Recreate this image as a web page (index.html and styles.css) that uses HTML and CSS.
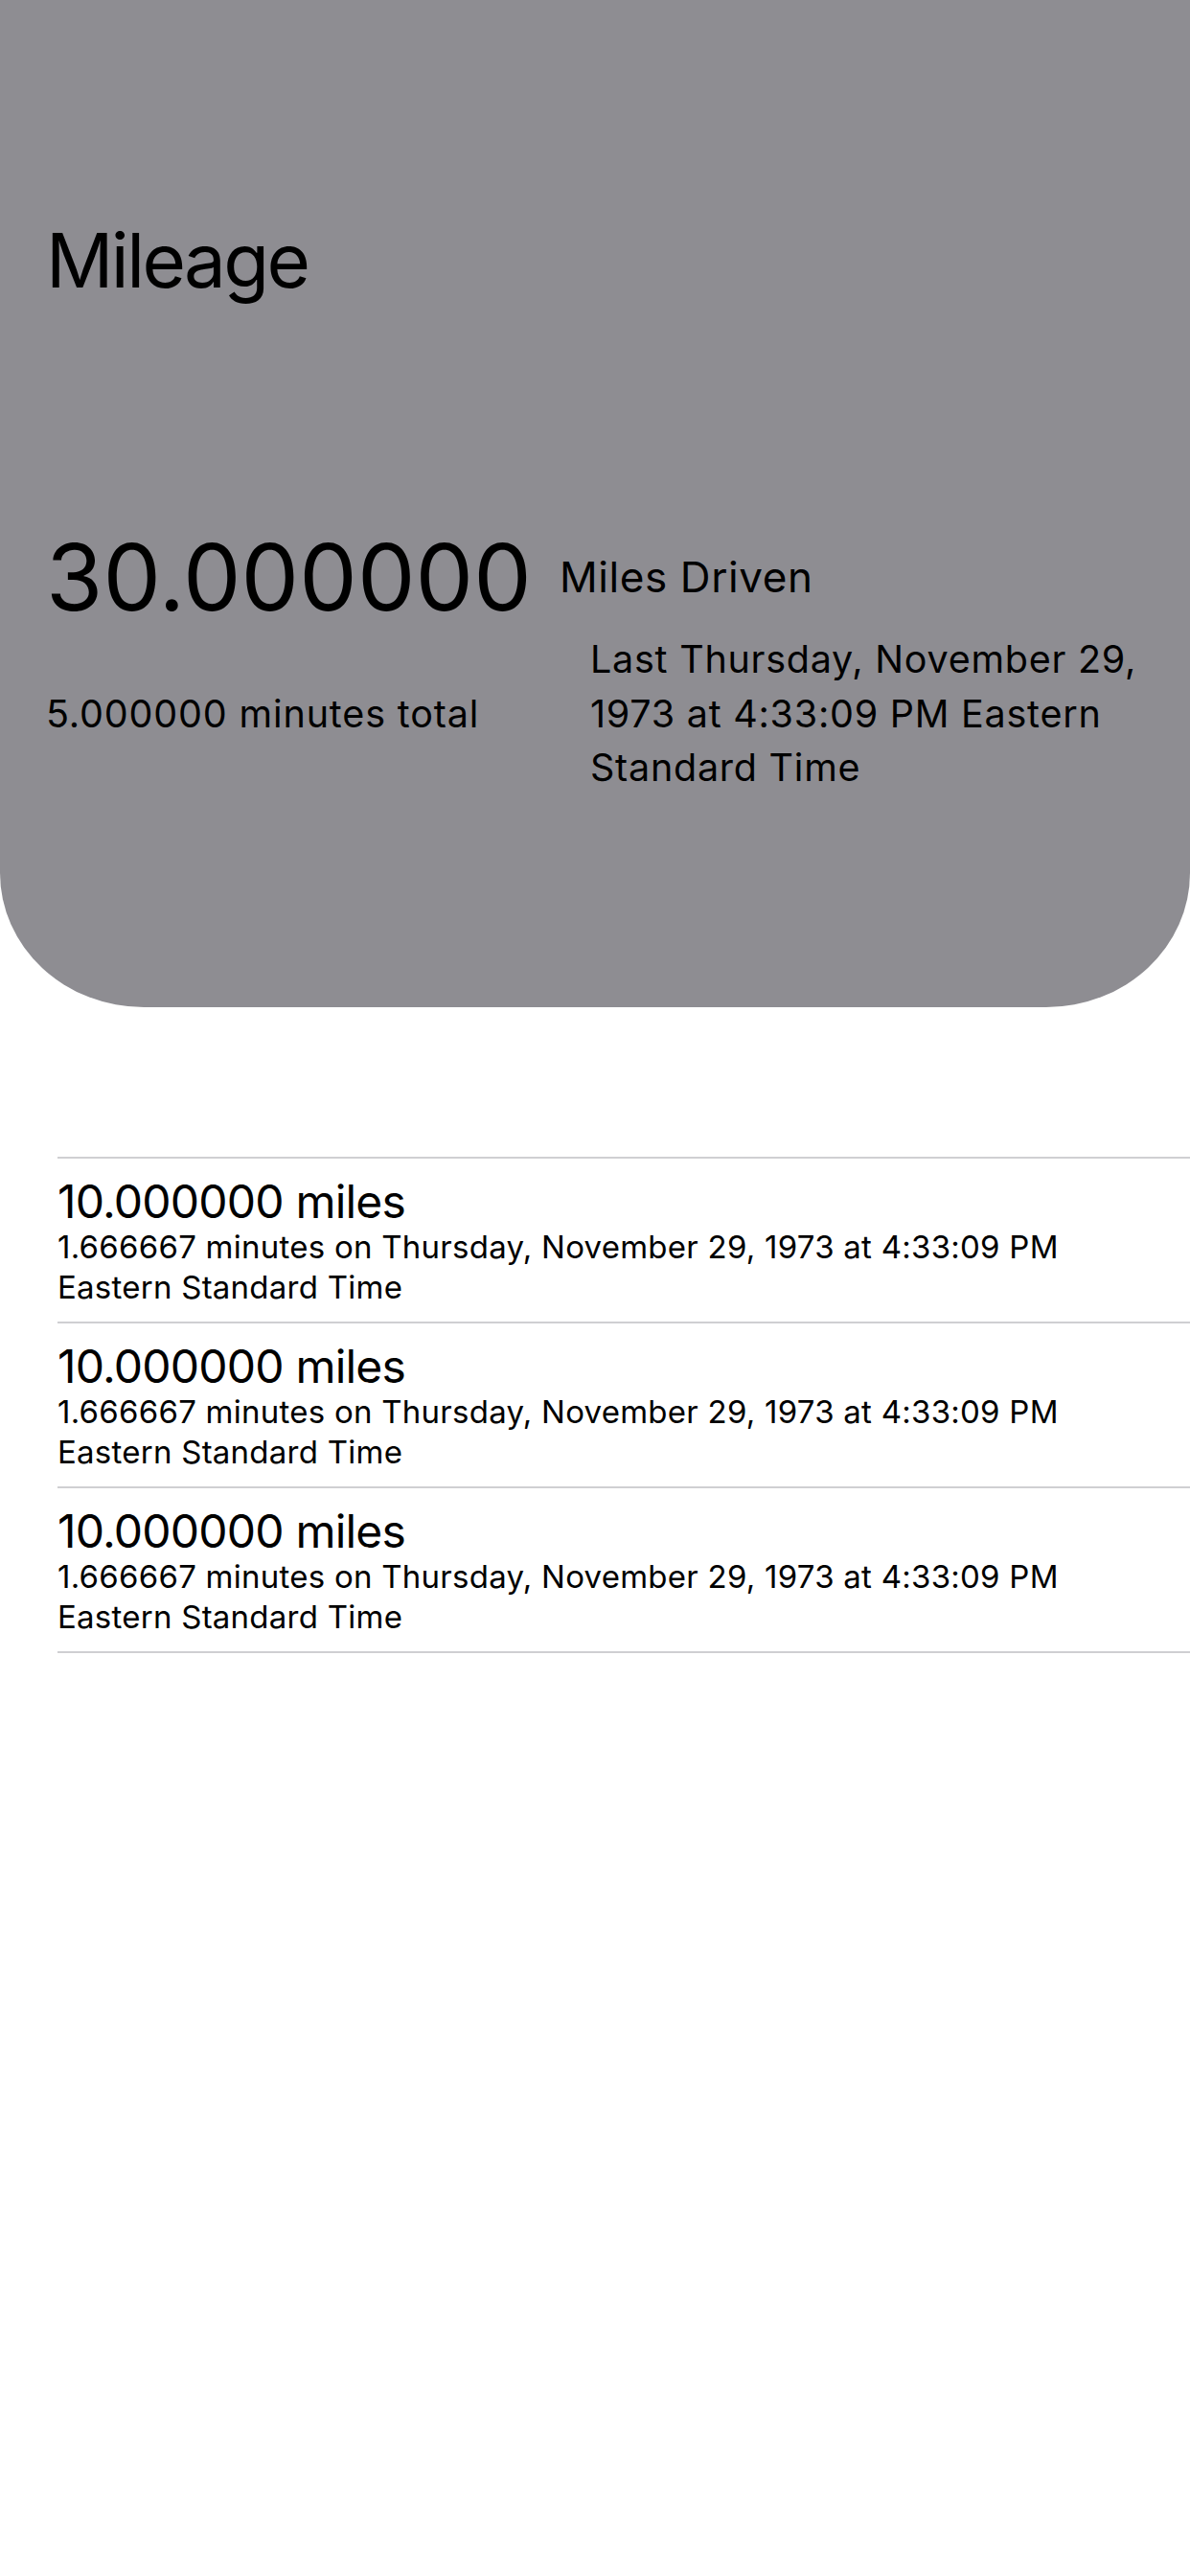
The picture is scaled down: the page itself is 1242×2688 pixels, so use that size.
FILE: index.html
```html
<!DOCTYPE html>
<html lang="en">
<head>
<meta charset="utf-8">
<title>Mileage</title>
<link rel="stylesheet" href="styles.css">
</head>
<body>
<header class="summary">
  <h1 class="summary-title">Mileage</h1>
  <div class="summary-row summary-row--top">
    <span class="summary-total">30.000000</span>
    <span class="summary-unit">Miles Driven</span>
  </div>
  <div class="summary-row summary-row--bottom">
    <span class="summary-minutes">5.000000 minutes total</span>
    <span class="summary-last">Last Thursday, November 29, 1973 at 4:33:09 PM Eastern Standard Time</span>
  </div>
</header>
<ul class="trips">
  <li class="trip">
    <div class="trip-miles">10.000000 miles</div>
    <div class="trip-detail">1.666667 minutes on Thursday, November 29, 1973 at 4:33:09 PM Eastern Standard Time</div>
  </li>
  <li class="trip">
    <div class="trip-miles">10.000000 miles</div>
    <div class="trip-detail">1.666667 minutes on Thursday, November 29, 1973 at 4:33:09 PM Eastern Standard Time</div>
  </li>
  <li class="trip">
    <div class="trip-miles">10.000000 miles</div>
    <div class="trip-detail">1.666667 minutes on Thursday, November 29, 1973 at 4:33:09 PM Eastern Standard Time</div>
  </li>
</ul>
</body>
</html>
```
FILE: styles.css
```css
html, body {
  margin: 0;
  padding: 0;
  background: #ffffff;
}

body {
  font-family: Inter, "Noto Sans", sans-serif;
  color: #000000;
  width: 1242px;
  min-height: 2688px;
}

.summary {
  background: #8e8d92;
  padding: 232px 44px 221px 48px;
  border-radius: 0 0 150px 150px / 0 0 140px 140px;
}

.summary-title {
  margin: 0;
  font-size: 78px;
  font-weight: 400;
  line-height: 80px;
  letter-spacing: -2.6px;
}

.summary-row {
  display: flex;
  align-items: center;
}

.summary-row--top {
  margin-top: 242px;
}

.summary-total {
  font-size: 96px;
  line-height: 96px;
  letter-spacing: 0.1px;
}

.summary-unit {
  margin-left: 29px;
  font-size: 44px;
  line-height: 44px;
  letter-spacing: 0.6px;
}

.summary-row--bottom {
  margin-top: 10px;
}

.summary-minutes {
  width: 568px;
  flex: none;
  font-size: 39.5px;
  line-height: 56.6px;
  letter-spacing: 0.85px;
}

.summary-last {
  flex: 1;
  font-size: 39.5px;
  line-height: 56.6px;
  letter-spacing: 0.75px;
}

.trips {
  list-style: none;
  margin: 156px 0 0 60px;
  padding: 0;
}

.trip {
  border-top: 2px solid #cfcfd2;
  padding: 19.5px 60px 14.5px 0;
}

.trip:last-child {
  border-bottom: 2px solid #cfcfd2;
}

.trip-miles {
  font-size: 48px;
  line-height: 52px;
  letter-spacing: -0.8px;
}

.trip-detail {
  font-size: 33px;
  line-height: 42px;
  letter-spacing: 0.25px;
}
```
